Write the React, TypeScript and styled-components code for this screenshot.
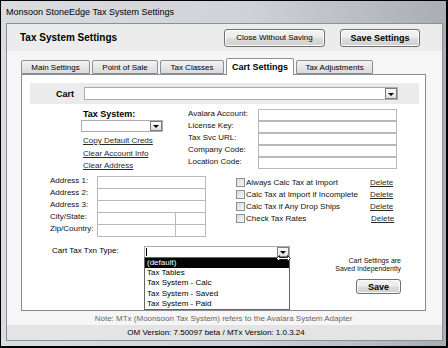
import { Fragment } from 'react'
import styled, { createGlobalStyle } from 'styled-components'

const GlobalStyle = createGlobalStyle`
  html, body {
    margin: 0;
    padding: 0;
    background: #ffffff;
  }
  body {
    font-family: 'Liberation Sans', Arial, sans-serif;
    color: #111;
  }
  * {
    box-sizing: border-box;
  }
`

const StyledWindow = styled.div`
  width: 448px;
  height: 348px;
  display: flex;
  flex-direction: column;
  padding: 0 3px 5px 5px;
  border: 1px solid #000;
  border-right-width: 2px;
  border-bottom-width: 2px;
  background: linear-gradient(to right, #dadde0, #cfd3d7 55%, #a9aeb4);
`

const StyledTitleBar = styled.div`
  height: 22px;
  display: flex;
  align-items: center;
  font-size: 9px;
  color: #000;
  white-space: nowrap;
`

const StyledClient = styled.div`
  flex: 1;
  display: flex;
  flex-direction: column;
  border: 1px solid #8b9097;
  background: #f5f5f5;
`

const StyledHeader = styled.div`
  height: 27px;
  display: flex;
  align-items: center;
  gap: 15px;
  padding: 0 22px 0 13px;
  background: #ececec;
`

const StyledHeaderTitle = styled.div`
  flex: 1;
  font-size: 10px;
  font-weight: bold;
  color: #000;
`

const StyledButton = styled.button<{ $width: number; $height?: number; $bold?: boolean }>`
  width: ${({ $width }) => $width}px;
  height: ${({ $height }) => $height ?? 18}px;
  padding: 0;
  font-family: inherit;
  font-size: ${({ $bold }) => ($bold ? 9 : 8)}px;
  font-weight: ${({ $bold }) => ($bold ? 'bold' : 'normal')};
  color: #000;
  border: 1px solid #707070;
  border-radius: 3px;
  background: linear-gradient(#f3f3f3, #ebebeb 48%, #dddddd 52%, #cfcfcf);
  box-shadow: inset 0 0 0 1px #fcfcfc;
`

const StyledBody = styled.div`
  flex: 1;
  display: flex;
  flex-direction: column;
  padding: 7px 16px 0 14px;
  background: #f6f6f6;
`

const StyledTabRow = styled.div`
  height: 17px;
  margin-bottom: -1px;
  display: flex;
  align-items: flex-end;
  gap: 2px;
  position: relative;
  z-index: 1;
`

const StyledTab = styled.div<{ $width: number; $active?: boolean }>`
  width: ${({ $width }) => $width}px;
  height: ${({ $active }) => ($active ? 17 : 14)}px;
  margin-bottom: ${({ $active }) => ($active ? 0 : 1)}px;
  display: flex;
  align-items: center;
  justify-content: center;
  font-size: ${({ $active }) => ($active ? 9 : 8)}px;
  font-weight: ${({ $active }) => ($active ? 'bold' : 'normal')};
  color: #000;
  border: 1px solid #8d8f94;
  border-bottom: ${({ $active }) => ($active ? 'none' : '1px solid #8d8f94')};
  border-radius: 2px 2px 0 0;
  background: ${({ $active }) => ($active ? '#ffffff' : 'linear-gradient(#f4f4f4, #e6e6e6 50%, #dadada)')};
`

const StyledPanel = styled.div`
  height: 237px;
  display: flex;
  flex-direction: column;
  padding: 8px 6px 0 8px;
  background: #ffffff;
  border: 1px solid #898c95;
`

const StyledCartBand = styled.div`
  height: 21px;
  display: flex;
  align-items: center;
  gap: 10px;
  padding-right: 21px;
  background: #ebebeb;
`

const StyledBandLabel = styled.div`
  width: 44px;
  text-align: right;
  font-size: 9px;
  font-weight: bold;
  color: #000;
`

const StyledCombo = styled.div<{ $width?: number; $height?: number }>`
  position: relative;
  ${({ $width }) => ($width ? `width: ${$width}px;` : 'flex: 1;')}
  height: ${({ $height }) => $height ?? 12}px;
  display: flex;
  align-items: stretch;
  justify-content: space-between;
  background: #ffffff;
  border: 1px solid #a9abb0;
`

const StyledComboButton = styled.span`
  width: 12px;
  display: flex;
  align-items: center;
  justify-content: center;
  border: 1px solid #7e7e7e;
  background: linear-gradient(#fbfbfb, #dedede);

  &::after {
    content: '';
    border-left: 3px solid transparent;
    border-right: 3px solid transparent;
    border-top: 3px solid #000;
    margin-top: 1px;
  }
`

const StyledCaret = styled.span`
  width: 1px;
  margin: 1px 0 1px 1px;
  background: #000;
`

const StyledDropList = styled.div`
  position: absolute;
  top: 100%;
  left: -1px;
  right: -1px;
  height: 53px;
  background: #ffffff;
  border: 1px solid #666;
  z-index: 2;
`

const StyledDropItem = styled.div<{ $selected?: boolean }>`
  height: 10.2px;
  line-height: 10.2px;
  padding-left: 2px;
  font-size: 8px;
  white-space: nowrap;
  color: ${({ $selected }) => ($selected ? '#ffffff' : '#000')};
  background: ${({ $selected }) => ($selected ? '#050505' : 'transparent')};
`

const StyledResizeCursor = styled.svg`
  position: absolute;
  right: -2px;
  bottom: -5px;
  z-index: 3;
`

const StyledMidRow = styled.div`
  height: 72px;
  display: flex;
  padding-top: 4px;
`

const StyledTaxColumn = styled.div`
  width: 82px;
  margin-left: 51px;
  display: flex;
  flex-direction: column;
`

const StyledBoldLabel = styled.div`
  height: 12px;
  line-height: 12px;
  padding-left: 2px;
  font-size: 9px;
  font-weight: bold;
  color: #000;
`

const StyledLinks = styled.div`
  margin-top: 3px;
  display: flex;
  flex-direction: column;
`

const StyledLink = styled.a`
  height: 12.5px;
  line-height: 12.5px;
  padding-left: 2px;
  font-size: 8px;
  color: #2a2a2a;
  text-decoration: underline;
  white-space: nowrap;
`

const StyledAccountGrid = styled.div`
  margin: 1px 0 0 25px;
  display: grid;
  grid-template-columns: 70px 139px;
  grid-auto-rows: 12px;
`

const StyledFieldLabel = styled.div`
  line-height: 10px;
  font-size: 8px;
  color: #111;
  white-space: nowrap;
`

const StyledField = styled.div`
  height: 12px;
  background: #ffffff;
  border: 1px solid #b7b9bd;
`

const StyledLowerRow = styled.div`
  display: flex;
  padding-left: 20px;
`

const StyledAddressLabels = styled.div`
  width: 47px;
  display: grid;
  grid-auto-rows: 12px;
`

const StyledAddressGrid = styled.div`
  width: 109px;
  display: grid;
  grid-template-columns: 78px 30px;
  grid-auto-rows: 12px;
  border-top: 1px solid #b7b9bd;
  border-left: 1px solid #b7b9bd;
  align-self: flex-start;
`

const StyledAddressCell = styled.div<{ $span?: boolean }>`
  grid-column: ${({ $span }) => ($span ? 'span 2' : 'auto')};
  background: #ffffff;
  border-right: 1px solid #b7b9bd;
  border-bottom: 1px solid #b7b9bd;
`

const StyledCheckList = styled.div`
  margin-left: 30px;
  display: grid;
  grid-auto-rows: 12px;
`

const StyledCheckRow = styled.div`
  display: flex;
  align-items: center;
`

const StyledCheckbox = styled.span`
  width: 9px;
  height: 9px;
  margin-right: 1px;
  border: 1px solid #8e8f8f;
  background: linear-gradient(135deg, #dcdcdc, #f6f6f6);
`

const StyledCheckText = styled.span`
  width: 124px;
  font-size: 8px;
  color: #111;
  white-space: nowrap;
`

const StyledDeleteLink = styled.a<{ $shift?: number }>`
  margin-left: ${({ $shift }) => $shift ?? 0}px;
  font-size: 8px;
  color: #2a2a2a;
  text-decoration: underline;
`

const StyledTxnSection = styled.div`
  margin-top: 9px;
  display: flex;
  align-items: flex-start;
  padding: 0 18px 0 22px;
`

const StyledTxnLabel = styled.div`
  width: 92px;
  height: 12px;
  line-height: 10px;
  font-size: 8px;
  color: #000;
  white-space: nowrap;
`

const StyledSaveBlock = styled.div`
  margin: 11px 0 0 auto;
  display: flex;
  flex-direction: column;
  align-items: flex-end;
  gap: 6px;
`

const StyledSaveNote = styled.div`
  font-size: 7px;
  line-height: 8px;
  text-align: right;
  color: #111;
`

const StyledNote = styled.div`
  height: 14px;
  line-height: 14px;
  padding-top: 1px;
  text-align: center;
  font-size: 8px;
  color: #666;
  white-space: nowrap;
`

const StyledStatusBar = styled.div`
  height: 15px;
  display: flex;
  align-items: center;
  justify-content: center;
  padding-right: 17px;
  font-size: 8px;
  color: #000;
  background: #e4e4e4;
`

const tabs = [
  { label: 'Main Settings', width: 69 },
  { label: 'Point of Sale', width: 66 },
  { label: 'Tax Classes', width: 64 },
  { label: 'Cart Settings', width: 68, active: true },
  { label: 'Tax Adjustments', width: 77 },
]

const accountFields = ['Avalara Account:', 'License Key:', 'Tax Svc URL:', 'Company Code:', 'Location Code:']
const addressLabels = ['Address 1:', 'Address 2:', 'Address 3:', 'City/State:', 'Zip/Country:']
const checks = [
  'Always Calc Tax at Import',
  'Calc Tax at Import if Incomplete',
  'Calc Tax if Any Drop Ships',
  'Check Tax Rates',
]
const txnTypes = ['(default)', 'Tax Tables', 'Tax System - Calc', 'Tax System - Saved', 'Tax System - Paid']

export default function App() {
  return (
    <>
      <GlobalStyle />
      <StyledWindow>
        <StyledTitleBar>Monsoon StoneEdge Tax System Settings</StyledTitleBar>
        <StyledClient>
          <StyledHeader>
            <StyledHeaderTitle>Tax System Settings</StyledHeaderTitle>
            <StyledButton $width={101}>Close Without Saving</StyledButton>
            <StyledButton $width={80} $bold>
              Save Settings
            </StyledButton>
          </StyledHeader>

          <StyledBody>
            <StyledTabRow>
              {tabs.map((tab) => (
                <StyledTab key={tab.label} $width={tab.width} $active={tab.active}>
                  {tab.label}
                </StyledTab>
              ))}
            </StyledTabRow>

            <StyledPanel>
              <StyledCartBand>
                <StyledBandLabel>Cart</StyledBandLabel>
                <StyledCombo $height={13}>
                  <span />
                  <StyledComboButton />
                </StyledCombo>
              </StyledCartBand>

              <StyledMidRow>
                <StyledTaxColumn>
                  <StyledBoldLabel>Tax System:</StyledBoldLabel>
                  <StyledCombo $width={82}>
                    <span />
                    <StyledComboButton />
                  </StyledCombo>
                  <StyledLinks>
                    <StyledLink>Copy Default Creds</StyledLink>
                    <StyledLink>Clear Account Info</StyledLink>
                    <StyledLink>Clear Address</StyledLink>
                  </StyledLinks>
                </StyledTaxColumn>

                <StyledAccountGrid>
                  {accountFields.map((label) => (
                    <Fragment key={label}>
                      <StyledFieldLabel>{label}</StyledFieldLabel>
                      <StyledField />
                    </Fragment>
                  ))}
                </StyledAccountGrid>
              </StyledMidRow>

              <StyledLowerRow>
                <StyledAddressLabels>
                  {addressLabels.map((label) => (
                    <StyledFieldLabel key={label}>{label}</StyledFieldLabel>
                  ))}
                </StyledAddressLabels>
                <StyledAddressGrid>
                  <StyledAddressCell $span />
                  <StyledAddressCell $span />
                  <StyledAddressCell $span />
                  <StyledAddressCell />
                  <StyledAddressCell />
                  <StyledAddressCell />
                  <StyledAddressCell />
                </StyledAddressGrid>

                <StyledCheckList>
                  {checks.map((text, i) => (
                    <StyledCheckRow key={text}>
                      <StyledCheckbox />
                      <StyledCheckText>{text}</StyledCheckText>
                      <StyledDeleteLink $shift={i === 3 ? 1 : 0}>Delete</StyledDeleteLink>
                    </StyledCheckRow>
                  ))}
                </StyledCheckList>
              </StyledLowerRow>

              <StyledTxnSection>
                <StyledTxnLabel>Cart Tax Txn Type:</StyledTxnLabel>
                <StyledCombo $width={146}>
                  <StyledCaret />
                  <StyledComboButton />
                  <StyledDropList>
                    {txnTypes.map((type, i) => (
                      <StyledDropItem key={type} $selected={i === 0}>
                        {type}
                      </StyledDropItem>
                    ))}
                  </StyledDropList>
                  <StyledResizeCursor width="15" height="7" viewBox="0 0 15 7">
                    <path
                      d="M0.5 3.5 L3.5 0.5 L3.5 2.5 L11.5 2.5 L11.5 0.5 L14.5 3.5 L11.5 6.5 L11.5 4.5 L3.5 4.5 L3.5 6.5 Z"
                      fill="#ffffff"
                      stroke="#000"
                      strokeWidth="0.8"
                    />
                  </StyledResizeCursor>
                </StyledCombo>

                <StyledSaveBlock>
                  <StyledSaveNote>
                    Cart Settings are
                    <br />
                    Saved Independently
                  </StyledSaveNote>
                  <StyledButton $width={45} $height={15} $bold>
                    Save
                  </StyledButton>
                </StyledSaveBlock>
              </StyledTxnSection>
            </StyledPanel>

            <StyledNote>Note: MTx (Moonsoon Tax System) refers to the Avalara System Adapter</StyledNote>
          </StyledBody>

          <StyledStatusBar>OM Version: 7.50097 beta / MTx Version: 1.0.3.24</StyledStatusBar>
        </StyledClient>
      </StyledWindow>
    </>
  )
}
